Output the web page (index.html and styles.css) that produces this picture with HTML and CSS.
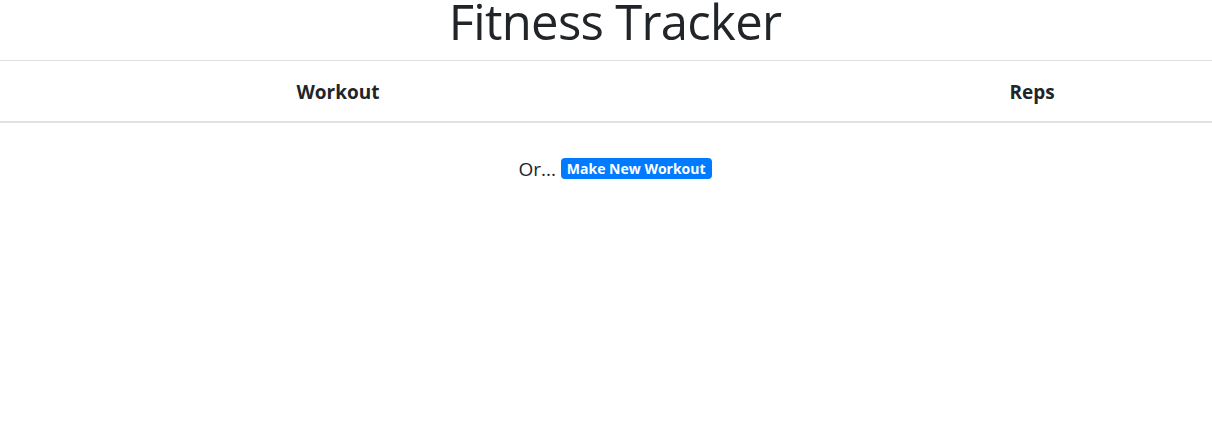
FILE: index.html
```html
<!DOCTYPE html>
<html lang="en">
<head>
<meta charset="utf-8">
<title>Fitness Tracker</title>
<link rel="stylesheet" href="styles.css">
</head>
<body>
<h1 class="title">Fitness Tracker</h1>
<table class="workouts">
  <colgroup>
    <col class="col-workout">
    <col class="col-gap">
    <col class="col-reps">
  </colgroup>
  <thead>
    <tr>
      <th>Workout</th>
      <th></th>
      <th>Reps</th>
    </tr>
  </thead>
</table>
<p class="alt">Or... <a class="badge" href="#">Make New Workout</a></p>
</body>
</html>
```

FILE: styles.css
```css
html, body {
  margin: 0;
  padding: 0;
  background: #fff;
}
body {
  font-family: "Open Sans", "Noto Sans", "Liberation Sans", sans-serif;
  color: #212529;
  font-size: 16px;
  line-height: 1.5;
}
.title {
  margin: 0 0 18px;
  padding-left: 18px;
  font-size: 49px;
  line-height: 42px;
  letter-spacing: -0.7px;
  font-weight: 400;
  text-align: center;
}
.workouts {
  width: 100%;
  border-collapse: collapse;
  table-layout: fixed;
}
.col-workout { width: 676px; }
.col-gap { width: 176px; }
.workouts th {
  border-top: 1px solid #dee2e6;
  border-bottom: 2px solid #dee2e6;
  padding: 16px 12px 14px;
  font-size: 19px;
  line-height: 30px;
  font-weight: 700;
  text-align: center;
}
.alt {
  margin: 31px 0 0;
  padding-left: 18px;
  text-align: center;
  font-size: 19px;
  line-height: 30px;
}
.badge {
  display: inline-block;
  padding: 4px 6px 3px;
  font-size: 14px;
  font-weight: 700;
  line-height: 1;
  color: #fff;
  background: #007bff;
  border-radius: 4px;
  text-decoration: none;
  vertical-align: 2px;
}
```
